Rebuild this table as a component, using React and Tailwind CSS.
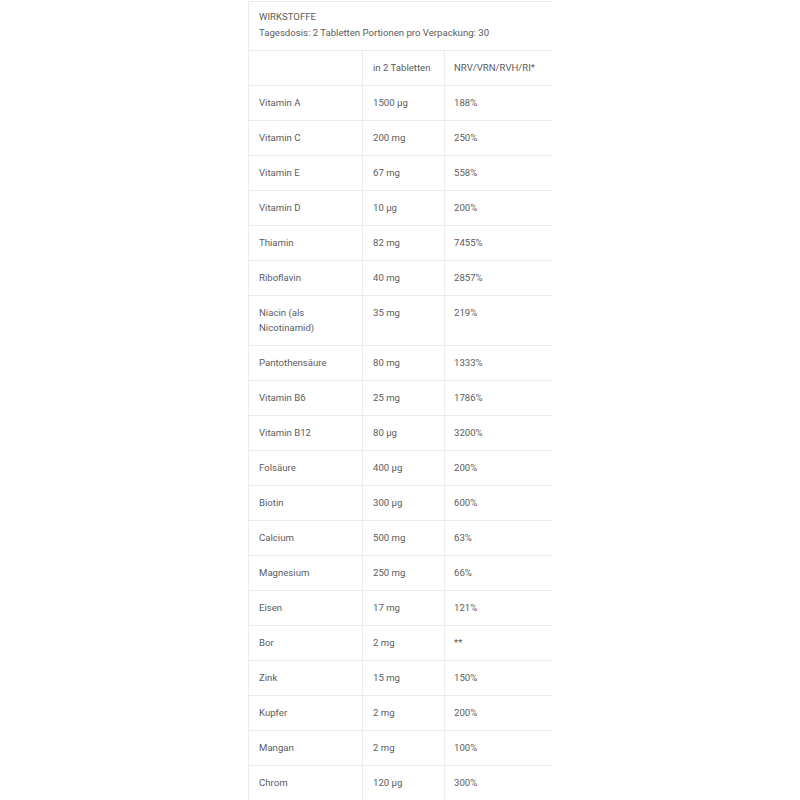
import React from "react";

const rows = [
  ["Vitamin A", "1500 µg", "188%"],
  ["Vitamin C", "200 mg", "250%"],
  ["Vitamin E", "67 mg", "558%"],
  ["Vitamin D", "10 µg", "200%"],
  ["Thiamin", "82 mg", "7455%"],
  ["Riboflavin", "40 mg", "2857%"],
  ["Niacin (als Nicotinamid)", "35 mg", "219%"],
  ["Pantothensäure", "80 mg", "1333%"],
  ["Vitamin B6", "25 mg", "1786%"],
  ["Vitamin B12", "80 µg", "3200%"],
  ["Folsäure", "400 µg", "200%"],
  ["Biotin", "300 µg", "600%"],
  ["Calcium", "500 mg", "63%"],
  ["Magnesium", "250 mg", "66%"],
  ["Eisen", "17 mg", "121%"],
  ["Bor", "2 mg", "**"],
  ["Zink", "15 mg", "150%"],
  ["Kupfer", "2 mg", "200%"],
  ["Mangan", "2 mg", "100%"],
  ["Chrom", "120 µg", "300%"],
];

export default function App() {
  return (
    <div className="w-[800px] h-[800px] bg-white overflow-hidden pl-[248px]" style={{ fontFamily: "Roboto, sans-serif" }}>
      <div className="mt-[1px] w-[304px] border-l border-t border-[#ececec] text-[9.6px] leading-[15px] text-[#5c5c5c]">
        <div className="px-[10px] pt-[7px] pb-[9px] leading-[16px] border-b border-[#ececec]">
          <div>WIRKSTOFFE</div>
          <div>Tagesdosis: 2 Tabletten Portionen pro Verpackung: 30</div>
        </div>
        <div className="grid grid-cols-[114px_82px_108px] border-b border-[#ececec]">
          <div className="pt-[9px] pb-[10px] px-[10px] border-r border-[#ececec]">&nbsp;</div>
          <div className="pt-[9px] pb-[10px] px-[10px] border-r border-[#ececec] whitespace-nowrap">in 2 Tabletten</div>
          <div className="pt-[9px] pb-[10px] px-[9px]">NRV/VRN/RVH/RI*</div>
        </div>
        {rows.map((r) => (
          <div key={r[0]} className="grid grid-cols-[114px_82px_108px] border-b border-[#ececec]">
            <div className="pt-[9px] pb-[10px] pl-[10px] pr-[8px] border-r border-[#ececec]">{r[0]}</div>
            <div className="pt-[9px] pb-[10px] px-[10px] border-r border-[#ececec]">{r[1]}</div>
            <div className="pt-[9px] pb-[10px] px-[9px]">{r[2]}</div>
          </div>
        ))}
      </div>
    </div>
  );
}
